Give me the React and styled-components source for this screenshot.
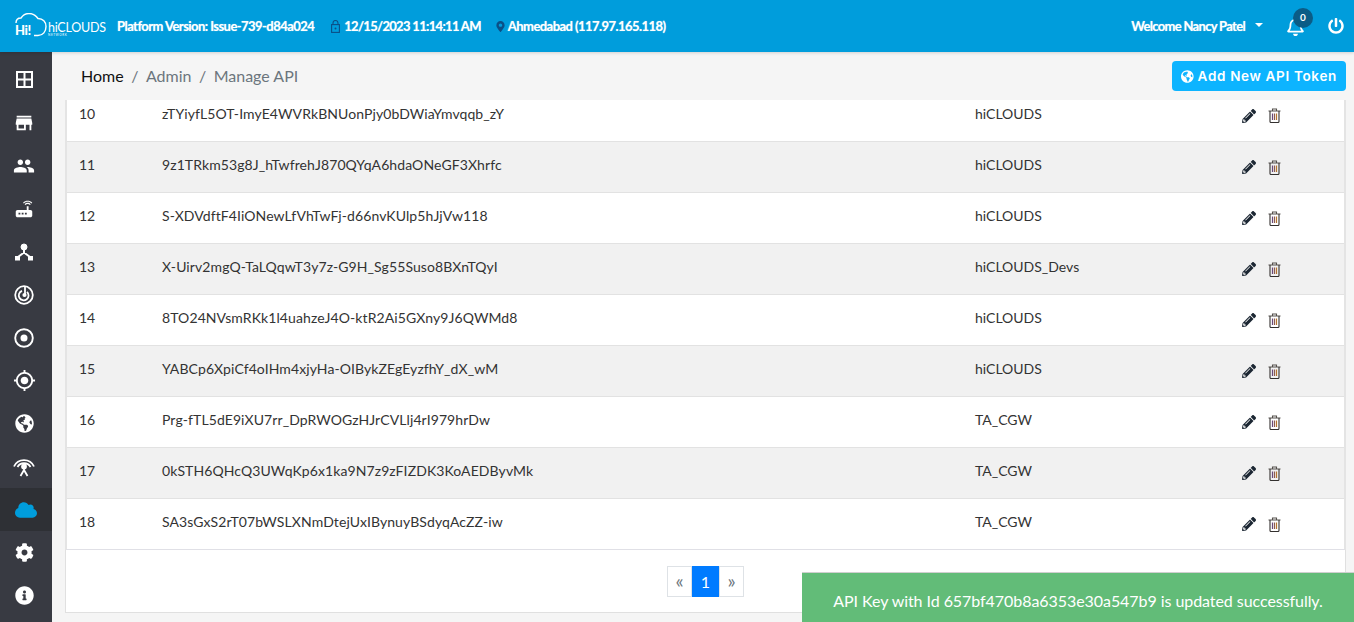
import styled, { createGlobalStyle } from 'styled-components';
import { FaCloud, FaCog, FaGlobeAmericas, FaInfoCircle, FaPencilAlt, FaRegBell, FaMapMarkerAlt, FaPowerOff } from 'react-icons/fa';
import { MdStore, MdPeople, MdRouter, MdGpsFixed } from 'react-icons/md';

const rows = [
	[10, 'zTYiyfL5OT-ImyE4WVRkBNUonPjy0bDWiaYmvqqb_zY', 'hiCLOUDS'],
	[11, '9z1TRkm53g8J_hTwfrehJ870QYqA6hdaONeGF3Xhrfc', 'hiCLOUDS'],
	[12, 'S-XDVdftF4IiONewLfVhTwFj-d66nvKUlp5hJjVw118', 'hiCLOUDS'],
	[13, 'X-Uirv2mgQ-TaLQqwT3y7z-G9H_Sg55Suso8BXnTQyI', 'hiCLOUDS_Devs'],
	[14, '8TO24NVsmRKk1l4uahzeJ4O-ktR2Ai5GXny9J6QWMd8', 'hiCLOUDS'],
	[15, 'YABCp6XpiCf4oIHm4xjyHa-OIBykZEgEyzfhY_dX_wM', 'hiCLOUDS'],
	[16, 'Prg-fTL5dE9iXU7rr_DpRWOGzHJrCVLlj4rI979hrDw', 'TA_CGW'],
	[17, '0kSTH6QHcQ3UWqKp6x1ka9N7z9zFIZDK3KoAEDByvMk', 'TA_CGW'],
	[18, 'SA3sGxS2rT07bWSLXNmDtejUxIBynuyBSdyqAcZZ-iw', 'TA_CGW'],
];

function GridIcon() {
	return (
		<svg width="17" height="17" viewBox="0 0 17 17" fill="none" stroke="#fff" strokeWidth="2">
			<rect x="1" y="1" width="15" height="15" />
			<path d="M8.500 1v15M1 8.500h15" />
		</svg>
	);
}

function HubIcon() {
	return (
		<svg width="20" height="20" viewBox="0 0 20 20" fill="#fff" stroke="#fff">
			<circle cx="10" cy="5" r="3" />
			<rect x="1.500" y="14.500" width="4" height="3.500" />
			<rect x="14.500" y="14.500" width="4" height="3.500" />
			<path d="M10 7v4M10 10.500 4 15M10 10.500l6 4.500" fill="none" strokeWidth="2" />
		</svg>
	);
}

function RadarIcon() {
	return (
		<svg width="20" height="20" viewBox="0 0 20 20" fill="none" stroke="#fff" strokeWidth="1.800">
			<circle cx="10" cy="10" r="8.800" />
			<path d="M8 5.800a4.900 4.900 0 1 0 5 1" />
			<path d="M11 2v8" />
			<circle cx="10.500" cy="10" r="1.200" fill="#fff" />
		</svg>
	);
}

function RingIcon() {
	return (
		<svg width="20" height="20" viewBox="0 0 20 20" fill="#fff" stroke="none">
			<circle cx="10" cy="10" r="8.800" fill="none" stroke="#fff" strokeWidth="1.900" />
			<circle cx="10" cy="10" r="3.500" />
		</svg>
	);
}

function AntennaIcon() {
	return (
		<svg width="22" height="20" viewBox="0 0 22 20" fill="none" stroke="#fff" strokeWidth="1.800">
			<path d="M1 9.500a11 11 0 0 1 20 0" />
			<path d="M4.500 10a7.500 7.500 0 0 1 13 0" />
			<circle cx="11" cy="9.500" r="2" fill="#fff" />
			<path d="M11 11v2.500M11 13l-3.500 6M11 13l3.500 6" />
		</svg>
	);
}

function LockIcon() {
	return (
		<svg width="9" height="13" viewBox="0 0 9 13" fill="none" stroke="#0b4f86" strokeWidth="1.100">
			<rect x="0.600" y="4.600" width="7.800" height="7.800" />
			<path d="M2 4.500V3a2.500 2.500 0 0 1 5 0v1.500" />
			<circle cx="4.500" cy="8.500" r="1" fill="#0b4f86" stroke="none" />
		</svg>
	);
}

function TrashIcon() {
	return (
		<svg width="13" height="15" viewBox="0 0 13 15" fill="none" stroke="#33302e" strokeWidth="1.100">
			<path d="M0.500 3h12M4.500 3V1h4v2" stroke="#55504c" />
			<path d="M2 3v10.500a1 1 0 0 0 1 1h7a1 1 0 0 0 1-1V3" />
			<path d="M4.500 5.500v6.500" stroke="#6a4a7a" strokeWidth="1.200" />
			<path d="M6.500 5.500v6.500" stroke="#8a5a50" strokeWidth="1.200" />
			<path d="M8.500 5.500v6.500" stroke="#b5762f" strokeWidth="1.200" />
		</svg>
	);
}

function Logo() {
	return (
		<LogoBox>
			<svg width="40" height="26" viewBox="0 0 40 26" fill="none" stroke="#fff" strokeWidth="1.400">
				<path d="M2 10c0-3 2-5 5-5 2-3 5-4.500 8-4.500 4 0 7 2 9 5 5 0 8 3.500 8 8 0 5-3 9-8 9h-4" />
			</svg>
			<LogoHi>Hi!</LogoHi>
			<LogoName>hiCLOUDS</LogoName>
			<LogoSub>NETWORK</LogoSub>
		</LogoBox>
	);
}

const sideIcons = [
	<GridIcon />,
	<MdStore size={22} />,
	<MdPeople size={22} />,
	<MdRouter size={22} />,
	<HubIcon />,
	<RadarIcon />,
	<RingIcon />,
	<MdGpsFixed size={23} />,
	<FaGlobeAmericas size={19} />,
	<AntennaIcon />,
	<FaCloud size={22} />,
	<FaCog size={19} />,
	<FaInfoCircle size={19} />,
];

function App() {
	return (
		<Page>
			<GlobalStyle />
			<Header>
				<Logo />
				<HeaderText>Platform Version: Issue-739-d84a024</HeaderText>
				<HeaderItem>
					<LockIcon />
					<HeaderText $tight>12/15/2023 11:14:11 AM</HeaderText>
				</HeaderItem>
				<PlaceItem>
					<FaMapMarkerAlt size={11} color="#0b4f86" />
					<HeaderText>Ahmedabad (117.97.165.118)</HeaderText>
				</PlaceItem>
				<HeaderRight>
					<HeaderText $tight>Welcome Nancy Patel</HeaderText>
					<Caret />
					<Bell>
						<FaRegBell size={19} color="#fff" />
						<BellBadge>0</BellBadge>
					</Bell>
					<FaPowerOff size={16} color="#fff" />
				</HeaderRight>
			</Header>
			<Body>
				<Sidebar>
					{sideIcons.map((icon, i) => (
						<SideItem key={i} $active={i === 10}>
							{icon}
						</SideItem>
					))}
				</Sidebar>
				<Main>
					<TopBar>
						<Breadcrumb>
							<Crumb $current>Home</Crumb>
							<Slash>/</Slash>
							<Crumb>Admin</Crumb>
							<Slash>/</Slash>
							<Crumb>Manage API</Crumb>
						</Breadcrumb>
						<AddButton>
							<FaGlobeAmericas size={13} />
							Add New API Token
						</AddButton>
					</TopBar>
					<Card>
						<TableScroll>
							<Table>
								<tbody>
									{rows.map((r, i) => (
										<Row key={r[0]} $odd={i % 2 === 1}>
											<NumCell>{r[0]}</NumCell>
											<KeyCell>{r[1]}</KeyCell>
											<OrgCell>{r[2]}</OrgCell>
											<ActionCell>
												<Actions>
													<FaPencilAlt size={14} color="#1c2733" />
													<TrashIcon />
												</Actions>
											</ActionCell>
										</Row>
									))}
								</tbody>
							</Table>
						</TableScroll>
						<Pager>
							<PageBtn>«</PageBtn>
							<PageBtn $active>1</PageBtn>
							<PageBtn>»</PageBtn>
						</Pager>
					</Card>
				</Main>
			</Body>
			<Toast>API Key with Id 657bf470b8a6353e30a547b9 is updated successfully.</Toast>
		</Page>
	);
}

const GlobalStyle = createGlobalStyle`
	html, body {
		margin: 0;
		padding: 0;
		height: 100%;
		overflow: hidden;
	}
	body {
		font-family: Lato, "Liberation Sans", sans-serif;
		color: #212529;
	}
	* {
		box-sizing: border-box;
	}
`;

const Page = styled.div`
	width: 1354px;
	height: 622px;
	display: flex;
	flex-direction: column;
	overflow: hidden;
	position: relative;
	background-color: #f5f5f5;
`;

const Header = styled.header`
	height: 52px;
	flex: none;
	background-color: #009ddc;
	display: flex;
	align-items: center;
	padding: 0 10px 0 14px;
	box-shadow: 0 1px 3px rgba(0, 0, 0, 0.15);
	z-index: 2;
`;

const LogoBox = styled.div`
	width: 103px;
	height: 26px;
	position: relative;
	flex: none;
`;

const LogoHi = styled.span`
	position: absolute;
	left: 1px;
	top: 9px;
	color: #fff;
	font-size: 13px;
	font-weight: 900;
	line-height: 16px;
	letter-spacing: -0.4px;
`;

const LogoName = styled.span`
	position: absolute;
	left: 34px;
	top: 8px;
	color: #fff;
	font-size: 12.500px;
	font-weight: 400;
	line-height: 13px;
	letter-spacing: -0.25px;
`;

const LogoSub = styled.span`
	position: absolute;
	left: 34px;
	top: 21px;
	color: #fff;
	font-size: 3px;
	line-height: 3px;
	letter-spacing: 0.6px;
`;

const HeaderText = styled.span`
	color: #fff;
	font-size: 13px;
	font-weight: 700;
	letter-spacing: ${(p) => (p.$tight ? '-0.68px' : '-0.55px')};
	white-space: nowrap;
	text-shadow: 0 0 1px rgba(255, 255, 255, 0.6);
`;

const HeaderItem = styled.div`
	display: flex;
	align-items: center;
	gap: 4px;
	margin-left: 17px;
`;

const PlaceItem = styled(HeaderItem)`
	gap: 2px;
	margin-left: 14px;
`;

const HeaderRight = styled.div`
	margin-left: auto;
	display: flex;
	align-items: center;
`;

const Caret = styled.span`
	width: 0;
	height: 0;
	margin: 0 0 3px 10px;
	border-left: 4px solid transparent;
	border-right: 4px solid transparent;
	border-top: 4px solid #fff;
`;

const Bell = styled.div`
	position: relative;
	display: flex;
	margin: 1px 23px 0 23px;
`;

const BellBadge = styled.span`
	position: absolute;
	left: 7px;
	top: -9px;
	width: 20px;
	height: 20px;
	border-radius: 50%;
	background-color: #0b5c86;
	color: #fff;
	font-size: 10px;
	font-weight: 700;
	text-align: center;
	line-height: 19px;
`;

const Body = styled.div`
	flex: 1;
	display: flex;
	min-height: 0;
`;

const Sidebar = styled.nav`
	width: 52px;
	flex: none;
	background-color: #383a42;
	display: flex;
	flex-direction: column;
	padding-top: 6px;
`;

const SideItem = styled.div`
	height: 43px;
	flex: none;
	display: flex;
	align-items: center;
	justify-content: center;
	padding-right: ${(p) => (p.$active ? '0' : '4px')};
	color: ${(p) => (p.$active ? '#009ddc' : '#fff')};
	background-color: ${(p) => (p.$active ? '#2e3035' : 'transparent')};
`;

const Main = styled.main`
	flex: 1;
	min-width: 0;
	display: flex;
	flex-direction: column;
	padding: 0 8px 9px 13px;
`;

const TopBar = styled.div`
	height: 48px;
	flex: none;
	display: flex;
	align-items: center;
	justify-content: space-between;
`;

const Breadcrumb = styled.div`
	display: flex;
	align-items: center;
	padding: 0 0 2px 16px;
	font-size: 16px;
`;

const Crumb = styled.span`
	color: ${(p) => (p.$current ? '#111' : '#6c757d')};
`;

const Slash = styled.span`
	color: #6c757d;
	margin: 0 7.5px;
`;

const AddButton = styled.button`
	height: 30px;
	width: 174px;
	padding: 0 9px;
	border: none;
	border-radius: 4px;
	background-color: #0db4ff;
	color: #fff;
	display: flex;
	align-items: center;
	gap: 4px;
	font-family: Inter, sans-serif;
	font-size: 13.500px;
	font-weight: 600;
	letter-spacing: 0.67px;
	white-space: nowrap;
`;

const Card = styled.section`
	flex: 1;
	min-height: 0;
	background-color: #fff;
	border-bottom: 1px solid #e0e0e0;
	display: flex;
	flex-direction: column;
	box-shadow: inset 1px 0 0 #e0e0e0, inset -1px 0 0 #e0e0e0;
`;

const TableScroll = styled.div`
	height: 450px;
	flex: none;
	overflow: hidden;
	border-left: 2px solid #e4e4e4;
	border-right: 2px solid #e4e4e4;
	border-bottom: 1px solid #e0e0e6;
`;

const Table = styled.table`
	width: 100%;
	margin-top: -10px;
	border-collapse: collapse;
	table-layout: fixed;
	font-size: 14px;
	color: #333;
`;

const Row = styled.tr`
	height: 51px;
	background-color: ${(p) => (p.$odd ? '#f1f1f1' : '#fff')};
	border-bottom: 1px solid #e2e2e2;
	&:first-child td:not(:last-child) {
		padding-bottom: 3px;
	}
	&:last-child {
		border-bottom: none;
	}
`;

const Cell = styled.td`
	padding: 0 12px 5px;
	vertical-align: middle;
`;

const NumCell = styled(Cell)`
	width: 83px;
`;

const KeyCell = styled(Cell)`
	width: 813px;
	letter-spacing: 0.09px;
`;

const OrgCell = styled(Cell)`
	width: 267px;
`;

const ActionCell = styled(Cell)`
	padding-top: 1px;
	padding-bottom: 0;
`;

const Actions = styled.div`
	display: flex;
	align-items: center;
	gap: 12px;
`;

const Pager = styled.div`
	flex: 1;
	display: flex;
	justify-content: center;
	align-items: flex-start;
	padding-top: 16px;
`;

const PageBtn = styled.span`
	height: 31px;
	width: ${(p) => (p.$active ? '27px' : '25px')};
	display: flex;
	align-items: center;
	justify-content: center;
	padding-bottom: ${(p) => (p.$active ? '0' : '3px')};
	font-size: ${(p) => (p.$active ? '16px' : '19px')};
	color: ${(p) => (p.$active ? '#fff' : '#6c757d')};
	background-color: ${(p) => (p.$active ? '#007bff' : '#fff')};
	border: 1px solid ${(p) => (p.$active ? '#007bff' : '#dee2e6')};
`;

const Toast = styled.div`
	position: absolute;
	right: 0;
	bottom: 0;
	width: 552px;
	height: 50px;
	background-color: #62bc78;
	border-top: 1px solid #cfcfcf;
	color: #fff;
	display: flex;
	align-items: center;
	justify-content: center;
	padding-top: 5px;
	font-size: 16px;
	letter-spacing: -0.06px;
`;

export default App;
